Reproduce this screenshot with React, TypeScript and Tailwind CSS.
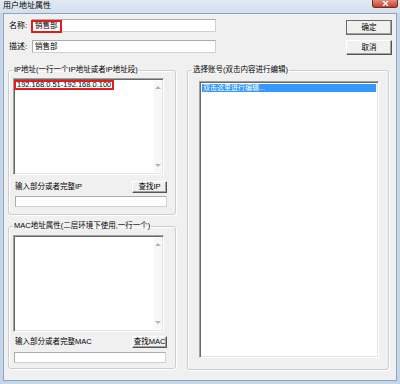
import type { ReactNode } from 'react';

const sunken =
  'bg-white border border-t-[#a0a0a0] border-l-[#a0a0a0] border-r-white border-b-white shadow-[inset_1px_1px_0_#696969,inset_-1px_-1px_0_#e3e3e3]';

function Btn({ children, className = '' }: { children: ReactNode; className?: string }) {
  return (
    <div
      className={`flex items-center justify-center bg-[#f0f0f0] border border-t-white border-l-white border-r-[#555] border-b-[#555] shadow-[inset_-1px_-1px_0_#a0a0a0] text-[7.5px] leading-none ${className}`}
    >
      {children}
    </div>
  );
}

function Field({ className = '', children }: { className?: string; children?: ReactNode }) {
  return (
    <div
      className={`relative flex items-center bg-white border border-[#d0d0d0] border-t-[#ababab] border-l-[#ababab] pl-[2px] text-[7.5px] leading-none ${className}`}
    >
      {children}
    </div>
  );
}

function Arrow({ up }: { up?: boolean }) {
  return (
    <svg width="6" height="4" viewBox="0 0 6 4" className="mx-auto">
      <path d={up ? 'M0 4 L3 1 L6 4 Z' : 'M0 0 L3 3 L6 0 Z'} fill="#b4b4b4" />
    </svg>
  );
}

function TextBox({ className = '', children }: { className?: string; children?: ReactNode }) {
  return (
    <div className={`flex ${sunken} ${className}`}>
      <div className="flex-1 pt-[1px]">{children}</div>
      <div className="w-[8px] my-[2px] mr-[1px] bg-[#f7f7f7] flex flex-col justify-between py-[4px]">
        <Arrow up />
        <Arrow />
      </div>
    </div>
  );
}

function Group({ title, className = '', children }: { title: string; className?: string; children: ReactNode }) {
  return (
    <fieldset
      className={`border border-[#c9ced3] rounded-[3px] shadow-[1px_1px_0_#fff,inset_1px_1px_0_#fff] px-[4px] ${className}`}
    >
      <legend className="h-[10px] px-[1px] text-[7.5px] leading-[10px] whitespace-nowrap">{title}</legend>
      {children}
    </fieldset>
  );
}

function FindRow({ label, button, className = '' }: { label: string; button: string; className?: string }) {
  return (
    <div className={`flex items-center w-[154px] pl-[2px] ${className}`}>
      <span className="text-[7.5px] leading-none">{label}</span>
      <Btn className="ml-auto w-[35px] h-[12px]">{button}</Btn>
    </div>
  );
}

export default function App() {
  return (
    <div className="w-[400px] h-[384px] overflow-hidden flex flex-col bg-[#c6d6e9] text-black font-['Liberation_Sans','Noto_Sans_CJK_SC',sans-serif]">
      {/* title bar */}
      <div className="h-[13px] flex items-start bg-gradient-to-b from-[#e2eaf4] to-[#d3dfed]">
        <span className="ml-[3px] mt-[1px] text-[8px] leading-[9px]">用户地址属性</span>
        <div className="ml-auto mr-[2px] w-[26px] h-[8px] rounded-b-[3px] border border-t-0 border-[#7a2a20] bg-gradient-to-b from-[#e08a7c] to-[#c2402c] flex items-center justify-center">
          <svg width="7" height="5" viewBox="0 0 7 5">
            <path d="M1 0 L6 5 M6 0 L1 5" stroke="#fff" strokeWidth="1.4" />
          </svg>
        </div>
      </div>

      {/* client area */}
      <div className="flex-1 mx-[3px] mb-[3px] border border-[#8fa4bf] bg-[#f0f0f0] flex flex-col">
        <div className="flex items-start mt-[5px]">
          <div className="flex flex-col gap-[8px] ml-[5px]">
            <div className="flex items-center h-[13px]">
              <span className="w-[23px] text-[8px] leading-none">名称:</span>
              <Field className="w-[184px] h-[13px]">
                销售部
                <span className="absolute -left-[2px] top-0 w-[31px] h-[13px] border-2 border-[#e21b1b]" />
              </Field>
            </div>
            <div className="flex items-center h-[13px]">
              <span className="w-[23px] text-[8px] leading-none">描述:</span>
              <Field className="w-[184px] h-[13px]">销售部</Field>
            </div>
          </div>
          <div className="ml-auto mr-[4px] mt-[1px] flex flex-col gap-[5px]">
            <Btn className="w-[46px] h-[15px] outline outline-1 outline-[#6a6a6a] -outline-offset-1">确定</Btn>
            <Btn className="w-[46px] h-[15px]">取消</Btn>
          </div>
        </div>

        <div className="flex items-start mt-[10px] ml-[4px]">
          <div className="flex flex-col gap-[6px] w-[168px]">
            <Group title="IP地址(一行一个IP地址或者IP地址段)" className="pb-[7px]">
              <TextBox className="mt-[3px] w-[151px] h-[97px]">
                <span className="block w-fit h-[10px] border-2 border-[#e21b1b] px-[1px] text-[7.5px] leading-[6px]">
                  192.168.0.51-192.168.0.100
                </span>
              </TextBox>
              <FindRow label="输入部分或者完整IP" button="查找IP" className="mt-[6px]" />
              <Field className="mt-[3px] ml-[2px] w-[152px] h-[11px]" />
            </Group>
            <Group title="MAC地址属性(二层环境下使用,一行一个)" className="pb-[5px]">
              <TextBox className="mt-[4px] w-[151px] h-[97px]" />
              <FindRow label="输入部分或者完整MAC" button="查找MAC" className="mt-[4px]" />
              <Field className="mt-[4px] ml-[1px] w-[152px] h-[11px]" />
            </Group>
          </div>

          <Group title="选择账号(双击内容进行编辑)" className="ml-[11px] w-[202px] pb-[11px]">
            <div className={`mt-[6px] ml-[7px] w-[180px] h-[277px] p-[2px] ${sunken}`}>
              <div className="h-[8px] bg-[#3399ff] text-white text-[7px] leading-[8px] pl-[1px]">双击这里进行编辑...</div>
            </div>
          </Group>
        </div>
      </div>
    </div>
  );
}
